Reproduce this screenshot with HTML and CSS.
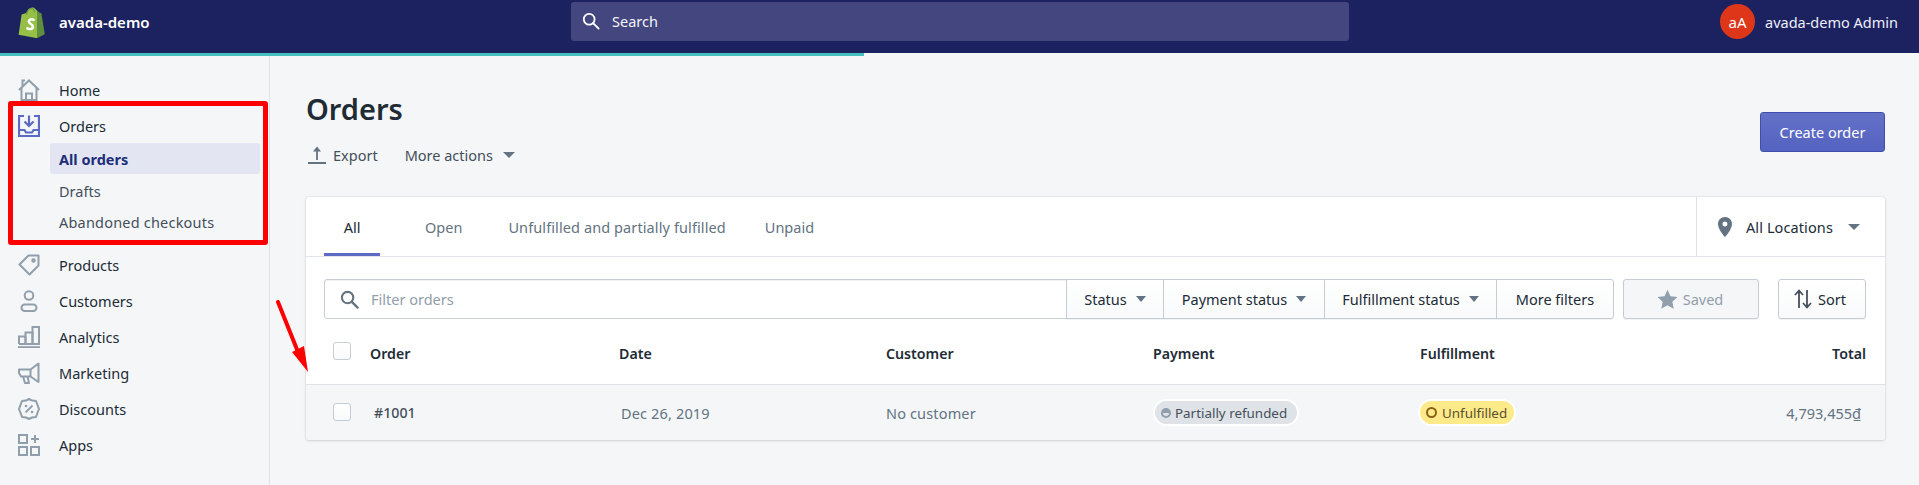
FILE: index.html
```html
<!DOCTYPE html>
<html lang="en">
<head>
<meta charset="utf-8">
<title>Orders</title>
<link rel="stylesheet" href="styles.css">
</head>
<body>
<header class="topbar">
  <div class="brand">
    <svg class="logo" viewBox="0 0 27 31"><path fill="#95bf47" d="M19 3.6 17.6 2.3C16.7 1.2 15.6.6 14.2.6 11.6.6 9.300 2.700 8.200 6L3.600 7.500.6 27.800 19 31.200Z"/><path fill="#5e8e3e" d="M19 3.600 21.600 5.800 23.400 6.200 26.800 27.200 19 31.200Z"/><path fill="none" stroke="#5e8e3e" stroke-width="1" d="M8.600 7.500C9.200 3.500 11.500 1.600 13.800 1.600 15.500 1.600 16.300 3 16.500 5.400"/><path fill="none" stroke="#fff" stroke-width="2.600" stroke-linecap="round" d="M15.600 12.800C13.800 11.800 10.800 12.300 10.800 14.500 10.800 17 15 17 15 19.800 15 22.300 11.800 22.600 9.400 21.300"/></svg>
    <span class="shop-name">avada-demo</span>
  </div>
  <div class="top-search">
    <svg class="ic-search" viewBox="0 0 20 20"><circle cx="8" cy="8" r="6" fill="none" stroke="#fff" stroke-width="2"/><path d="M12.500 12.500 18.500 18.500" stroke="#fff" stroke-width="2" stroke-linecap="round"/></svg>
    <span>Search</span>
  </div>
  <div class="account">
    <span class="avatar">aA</span>
    <span class="account-name">avada-demo Admin</span>
  </div>
</header>
<div class="progress"><div class="progress-fill"></div></div>
<div class="shell">
  <nav class="sidebar">
    <a class="nav-item">
      <svg class="nav-ic" viewBox="0 0 22 22"><g fill="none" stroke="#919eab" stroke-width="2"><path d="M1 11 11 1.500 21 11"/><path d="M3.500 9V21H18.500V9"/><path d="M8 21V14.500H14V21"/><path d="M4.500 7V1.500H7"/></g></svg>
      <span>Home</span>
    </a>
    <a class="nav-item nav-orders">
      <svg class="nav-ic" viewBox="0 0 22 22"><g fill="none" stroke="#5c6ac4" stroke-width="2.200"><path d="M6 1H1V21H21V1H16"/><path d="M1 15H6.500L8 17.500H14L15.500 15H21"/><path d="M11 .5V10"/><path d="M6.500 6.500 11 11 15.500 6.500"/></g></svg>
      <span>Orders</span>
    </a>
    <a class="sub-item sub-active">All orders</a>
    <a class="sub-item">Drafts</a>
    <a class="sub-item sub-last">Abandoned checkouts</a>
    <a class="nav-item">
      <svg class="nav-ic" viewBox="0 0 22 22"><g fill="none" stroke="#919eab" stroke-width="2"><path d="M1.500 10.500 10.500 1.500H20.500V11.500L11.500 20.500Z" stroke-linejoin="round"/><circle cx="15.500" cy="6.500" r="1.300"/></g></svg>
      <span>Products</span>
    </a>
    <a class="nav-item">
      <svg class="nav-ic" viewBox="0 0 22 22"><g fill="none" stroke="#919eab" stroke-width="2"><circle cx="11" cy="5.500" r="4.300"/><rect x="3.500" y="14.500" width="15" height="6.500" rx="3.250"/></g></svg>
      <span>Customers</span>
    </a>
    <a class="nav-item">
      <svg class="nav-ic" viewBox="0 0 22 22"><g fill="none" stroke="#919eab" stroke-width="2"><path d="M1 18V10.500H7.500V18"/><path d="M7.500 18V6.500H14.500V18"/><path d="M14.500 18V1H21V18H1"/><path d="M0 21.200H22"/></g></svg>
      <span>Analytics</span>
    </a>
    <a class="nav-item">
      <svg class="nav-ic" viewBox="0 0 22 22"><g fill="none" stroke="#919eab" stroke-width="2" stroke-linejoin="round"><path d="M1 7.500H12.500L20.500 1.500V20L12.500 14.500H3L1 11Z"/><path d="M12.500 7.500V14.500"/><path d="M5 14.500 7 21H11L9.500 14.500"/></g></svg>
      <span>Marketing</span>
    </a>
    <a class="nav-item">
      <svg class="nav-ic" viewBox="0 0 22 22"><path fill="none" stroke="#919eab" stroke-width="2" stroke-linejoin="round" d="M11 1 14 2.600 18 3 19.400 6.600 21 11 19.400 15 18 19 14 19.500 11 21 8 19.500 4 19 2.600 15 1 11 2.600 6.600 4 3 8 2.600Z"/><path stroke="#919eab" stroke-width="1.800" d="M7.500 14.500 14.500 7.500"/><circle cx="8" cy="8" r="1.300" fill="#919eab"/><circle cx="14" cy="14" r="1.300" fill="#919eab"/></svg>
      <span>Discounts</span>
    </a>
    <a class="nav-item">
      <svg class="nav-ic" viewBox="0 0 22 22"><g fill="none" stroke="#919eab" stroke-width="2"><rect x="1" y="1" width="8" height="8"/><rect x="1" y="13" width="8" height="8"/><rect x="13" y="13" width="8" height="8"/><path d="M17 1V9M13 5H21"/></g></svg>
      <span>Apps</span>
    </a>
  </nav>
  <main class="main">
    <div class="page-head">
      <div>
        <h1 class="page-title">Orders</h1>
        <div class="page-actions">
          <a class="action">
            <svg class="ic-export" viewBox="0 0 18 18"><path fill="none" stroke="#637381" stroke-width="1.800" d="M9 14V2M0 17H18"/><path fill="#637381" d="M5 5.500 9 .5 13 5.500Z"/></svg>
            <span>Export</span>
          </a>
          <a class="action action-more">
            <span>More actions</span>
            <i class="caret caret-lg"></i>
          </a>
        </div>
      </div>
      <button class="btn-primary">Create order</button>
    </div>
    <section class="card">
      <div class="tabs-row">
        <div class="tabs">
          <a class="tab tab-all">All</a>
          <a class="tab tab-open">Open</a>
          <a class="tab tab-unf">Unfulfilled and partially fulfilled</a>
          <a class="tab tab-unpaid">Unpaid</a>
        </div>
        <div class="location">
          <svg class="ic-pin" viewBox="0 0 14 20"><path fill="#637381" fill-rule="evenodd" d="M7 0C3 0 0 3 0 7c0 4 4 10 7 13 3-3 7-9 7-13 0-4-3-7-7-7Zm0 9.500A2.500 2.500 0 1 1 7 4.500a2.500 2.500 0 0 1 0 5Z"/></svg>
          <span class="location-name">All Locations</span>
          <i class="caret caret-lg"></i>
        </div>
      </div>
      <div class="filters">
        <div class="filter-input">
          <svg class="ic-filter" viewBox="0 0 20 20"><circle cx="8" cy="8" r="6" fill="none" stroke="#637381" stroke-width="2.200"/><path d="M12.500 12.500 18.500 18.500" stroke="#637381" stroke-width="2.400" stroke-linecap="round"/></svg>
          <span>Filter orders</span>
        </div>
        <div class="seg seg-status">Status <i class="caret"></i></div>
        <div class="seg seg-pay">Payment status <i class="caret"></i></div>
        <div class="seg seg-ful">Fulfillment status <i class="caret"></i></div>
        <div class="seg seg-more">More filters</div>
        <div class="btn-saved">
          <svg class="ic-star" viewBox="0 0 20 20"><path fill="#919eab" d="M10 .8 12.800 6.800 19.500 7.600 14.600 12.200 15.900 18.800 10 15.500 4.100 18.800 5.400 12.200.5 7.600 7.200 6.800Z"/></svg>
          <span>Saved</span>
        </div>
        <div class="btn-sort">
          <svg class="ic-sort" viewBox="0 0 18 20"><g fill="none" stroke="#454f5b" stroke-width="1.800"><path d="M5 19V2M1 6 5 1.500 9 6"/><path d="M13 1V18M9 14 13 18.500 17 14"/></g></svg>
          <span>Sort</span>
        </div>
      </div>
      <div class="table-row table-head">
        <span class="check"></span>
        <span>Order</span>
        <span>Date</span>
        <span>Customer</span>
        <span>Payment</span>
        <span>Fulfillment</span>
        <span class="total">Total</span>
      </div>
      <div class="table-row table-body">
        <span class="check"></span>
        <span class="order-no">#1001</span>
        <span class="cell">Dec 26, 2019</span>
        <span class="cell cell-cust">No customer</span>
        <span><span class="badge badge-pay"><i class="dot-pay"></i>Partially refunded</span></span>
        <span><span class="badge badge-ful"><i class="dot-ful"></i>Unfulfilled</span></span>
        <span class="total cell total-val">4,793,455₫</span>
      </div>
    </section>
  </main>
</div>
<div class="red-box"></div>
<svg class="red-arrow" viewBox="0 0 36 76"><path d="M2 2 24 57" stroke="#f00" stroke-width="4" stroke-linecap="round" fill="none"/><path fill="#f00" d="M16 52 28 46 32 72Z"/></svg>
</body>
</html>
```
FILE: styles.css
```css
* { box-sizing: border-box; }
html, body { margin: 0; height: 485px; overflow: hidden; }
body {
  position: relative;
  background: #f4f6f8;
  color: #212b36;
  font-family: "Noto Sans", "Open Sans", sans-serif;
  font-size: 14px;
}
i { display: inline-block; font-style: normal; }

.topbar { height: 53px; background: #1c2260; display: flex; align-items: flex-start; color: #fff; }
.brand { width: 571px; height: 44px; display: flex; align-items: center; padding-left: 18px; }
.logo { width: 27px; height: 31px; margin-right: 14px; }
.shop-name { font-weight: 600; font-size: 15px; }
.top-search {
  width: 778px; height: 39px; margin-top: 2px; padding: 0 0 2px 11px;
  display: flex; align-items: center; background: #43467f; border-radius: 3px;
  font-size: 14.500px; color: #f4f5fa;
}
.ic-search { width: 18px; height: 18px; margin-right: 12px; }
.account { flex: 1; display: flex; align-items: center; padding: 4px 0 0 371px; }
.avatar {
  width: 35px; height: 35px; border-radius: 50%; background: #de3618;
  display: flex; align-items: center; justify-content: center; font-size: 15px; margin-right: 10px;
}
.account-name { font-size: 14.500px; color: #eceef8; white-space: nowrap; }

.progress { height: 3px; background: #f4f6f8; }
.progress-fill { width: 864px; height: 3px; background: #47c1bf; }

.shell { display: flex; height: 429px; }
.sidebar { width: 270px; flex: none; border-right: 1px solid #dfe3e8; padding: 16px 0 0 18px; }
.nav-item { display: flex; align-items: center; height: 36px; font-size: 14.500px; color: #212b36; }
.nav-orders { height: 35px; }
.nav-ic { width: 22px; height: 22px; margin-right: 19px; flex: none; }
.sub-item {
  display: flex; align-items: center; height: 32px; width: 210px; margin-left: 32px;
  padding-left: 9px; font-size: 14.500px; color: #454f5b;
}
.sub-active { height: 31px; margin-bottom: 1px; background: #e3e6f2; border-radius: 3px; font-weight: 700; color: #202e78; }
.sub-last { height: 30px; margin-bottom: 10px; letter-spacing: .2px; }

.main { flex: 1; padding: 0 35px 0 36px; }
.page-head { display: flex; justify-content: space-between; align-items: flex-start; height: 141px; }
.page-title { margin: 32px 0 0; font-size: 29px; line-height: 42px; font-weight: 600; color: #212b36; }
.page-actions { display: flex; align-items: center; margin-top: 13px; height: 24px; color: #454f5b; }
.action { display: flex; align-items: center; font-size: 14.500px; }
.ic-export { width: 18px; height: 18px; margin: 0 7px 0 2px; }
.action-more { margin-left: 27px; }
.action-more .caret { margin-left: 10px; }
.btn-primary {
  width: 125px; height: 40px; margin-top: 56px; padding: 0;
  background: linear-gradient(#6371c7, #5563c1); border: 1px solid #3f4eae; border-radius: 3px;
  color: #fff; font: inherit; font-size: 14.500px;
}

.caret { width: 0; height: 0; border-left: 5px solid transparent; border-right: 5px solid transparent; border-top: 6px solid #637381; }
.caret-lg { border-left-width: 6px; border-right-width: 6px; }

.card { background: #fff; border-radius: 3px; box-shadow: 0 0 0 1px rgba(63,63,68,.05), 0 1px 3px rgba(63,63,68,.15); height: 243px; width: 1579px; }
.tabs-row { display: flex; justify-content: space-between; height: 60px; border-bottom: 1px solid #dfe3e8; }
.tabs { display: flex; }
.tab { display: flex; align-items: center; height: 59px; padding-top: 3px; color: #637381; font-size: 14.500px; white-space: nowrap; border-bottom: 3px solid transparent; margin-bottom: -1px; }
.tab-all { margin-left: 18px; width: 56px; justify-content: center; color: #212b36; border-bottom-color: #5c6ac4; }
.tab-open { margin-left: 45px; }
.tab-unf { margin-left: 46px; letter-spacing: .1px; }
.tab-unpaid { margin-left: 39px; }
.location { width: 189px; border-left: 1px solid #dfe3e8; display: flex; align-items: center; padding-left: 21px; font-size: 14.500px; color: #212b36; }
.location-name { letter-spacing: .1px; }
.ic-pin { width: 14px; height: 20px; margin-right: 14px; }
.location .caret { margin-left: 15px; }

.filters { display: flex; align-items: stretch; height: 40px; margin: 22px 0 0 18px; }
.filter-input {
  width: 743px; display: flex; align-items: center; padding-left: 15px;
  border: 1px solid #c4cdd5; border-radius: 3px 0 0 3px; color: #919eab; font-size: 14.500px;
  box-shadow: inset 0 1px 0 rgba(99,115,129,.1);
}
.ic-filter { width: 19px; height: 19px; margin-right: 12px; }
.seg {
  display: flex; align-items: center; justify-content: center; gap: 9px; margin-left: -1px;
  border: 1px solid #c4cdd5; background: linear-gradient(#fff, #f9fafb); font-size: 14.500px; color: #212b36;
  box-shadow: 0 1px 0 rgba(22,29,37,.05); white-space: nowrap;
}
.seg-status { width: 98px; }
.seg-pay { width: 162px; }
.seg-ful { width: 173px; }
.seg-more { width: 118px; border-radius: 0 3px 3px 0; }
.btn-saved {
  width: 136px; margin-left: 9px; display: flex; align-items: center; justify-content: center;
  background: #f4f6f8; border: 1px solid #c4cdd5; border-radius: 3px; color: #919eab; font-size: 14.500px;
  box-shadow: 0 1px 0 rgba(22,29,37,.05);
}
.ic-star { width: 21px; height: 21px; margin: 0 5px 0 -2px; }
.btn-sort {
  width: 88px; margin-left: 19px; display: flex; align-items: center; justify-content: center;
  background: linear-gradient(#fff, #f9fafb); border: 1px solid #c4cdd5; border-radius: 3px; font-size: 14.500px;
  box-shadow: 0 1px 0 rgba(22,29,37,.05);
}
.ic-sort { width: 18px; height: 20px; margin: 0 6px 0 -4px; }

.table-row { display: grid; grid-template-columns: 64px 249px 267px 267px 267px 1fr 100px; align-items: center; padding-right: 19px; }
.table-head { height: 66px; padding-top: 3px; border-bottom: 1px solid #dfe3e8; font-weight: 600; font-size: 14.200px; color: #212b36; }
.table-body { height: 55px; background: #f4f6f8; border-radius: 0 0 3px 3px; font-size: 14.500px; }
.check { width: 18px; height: 18px; margin-left: 27px; border: 1px solid #c4cdd5; border-radius: 3px; background: linear-gradient(#fff, #f9fafb); }
.table-head .check { margin-bottom: 4px; }
.table-body .check { margin-bottom: 1px; }
.total { text-align: right; }
.order-no { padding-left: 4px; font-weight: 500; font-size: 14.200px; color: #454f5b; }
.cell { padding-left: 2px; color: #637381; letter-spacing: .15px; }
.cell-cust { padding-left: 0; }
.total-val { padding-right: 5px; white-space: nowrap; letter-spacing: 0; }

.badge {
  display: inline-flex; align-items: center; height: 27px; padding: 0 8px; border: 2px solid #fff;
  border-radius: 14px; font-size: 13.400px; color: #454f5b; vertical-align: middle; white-space: nowrap;
}
.badge-pay { background: #dfe3e8; width: 146px; padding-left: 6px; }
.badge-ful { background: #ffea8a; margin-left: -2px; width: 98px; padding-left: 6px; color: #595130; }
.dot-pay { width: 10px; height: 10px; margin-right: 4px; flex: none; border-radius: 50%; border: 2px solid #919eab; background: linear-gradient(#919eab 50%, #dfe3e8 50%); }
.dot-ful { width: 11px; height: 11px; margin-right: 5px; flex: none; border-radius: 50%; border: 2px solid #8a6116; }

.red-box { position: absolute; left: 8px; top: 101px; width: 260px; height: 144px; border: 5px solid #f00; border-radius: 3px; }
.red-arrow { position: absolute; left: 276px; top: 300px; width: 36px; height: 76px; }
```
